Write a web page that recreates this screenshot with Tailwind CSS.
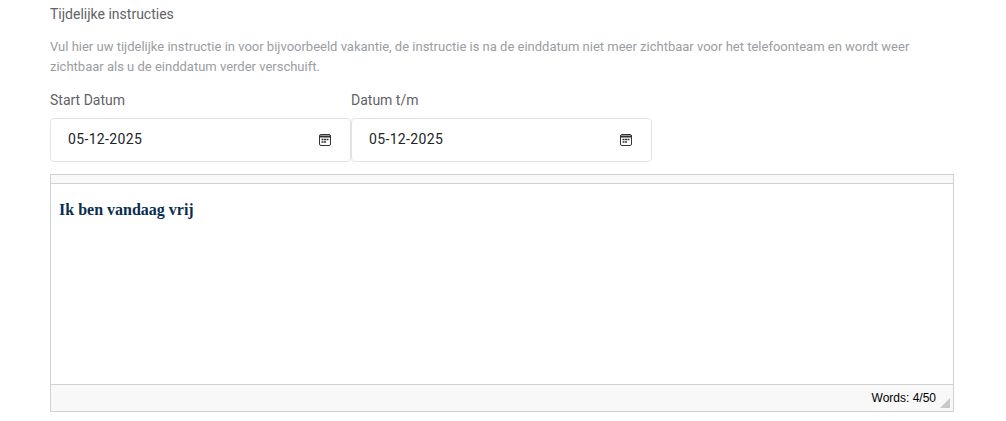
<!DOCTYPE html>
<html lang="nl">
<head>
  <meta charset="UTF-8">
  <title>Tijdelijke instructies</title>
  <script src="https://cdn.jsdelivr.net/npm/@tailwindcss/browser@4"></script>
</head>
<body class="bg-white font-['Roboto',sans-serif] h-[421px] overflow-hidden">
  <div class="pl-[50px] w-[954px] pt-[6px]">
    <h4 class="text-[14px] leading-[17px] text-[#5f6368]">Tijdelijke instructies</h4>

    <p class="mt-[14px] text-[13px] leading-[20px] text-[#9a9da3]">Vul hier uw tijdelijke instructie in voor bijvoorbeeld vakantie, de instructie is na de einddatum niet meer zichtbaar voor het telefoonteam en wordt weer zichtbaar als u de einddatum verder verschuift.</p>

    <!-- datum velden -->
    <div class="flex mt-[15px]">
      <div class="w-[301px]">
        <label class="block text-[14px] leading-[17px] text-[#5f6368]">Start Datum</label>
        <div class="mt-[9px] h-[44px] border border-[#e2e3e5] rounded-[4px] flex items-center justify-between pl-[17px] pr-[18px]">
          <span class="mb-[2px] text-[14px] tracking-[0.35px] text-[#212529]">05-12-2025</span>
          <svg class="w-[14px] h-[14px] text-[#333]" viewBox="0 0 14 14" fill="none" stroke="currentColor">
            <rect x="1.5" y="1.5" width="11" height="11" rx="1.5" stroke-width="1"/>
            <path d="M1.5 3.5h11" stroke-width="2"/>
            <path d="M3.5 6.5h2M6 6.5h2M8.5 6.5h2M3.5 9h2M6 9h2" stroke-width="1.5"/>
          </svg>
        </div>
      </div>
      <div class="w-[301px]">
        <label class="block text-[14px] leading-[17px] text-[#5f6368]">Datum t/m</label>
        <div class="mt-[9px] h-[44px] border border-[#e2e3e5] rounded-[4px] flex items-center justify-between pl-[17px] pr-[18px]">
          <span class="mb-[2px] text-[14px] tracking-[0.35px] text-[#212529]">05-12-2025</span>
          <svg class="w-[14px] h-[14px] text-[#333]" viewBox="0 0 14 14" fill="none" stroke="currentColor">
            <rect x="1.5" y="1.5" width="11" height="11" rx="1.5" stroke-width="1"/>
            <path d="M1.5 3.5h11" stroke-width="2"/>
            <path d="M3.5 6.5h2M6 6.5h2M8.5 6.5h2M3.5 9h2M6 9h2" stroke-width="1.5"/>
          </svg>
        </div>
      </div>
    </div>

    <!-- editor -->
    <div class="mt-[12px] h-[238px] border border-[#d1d1d1] flex flex-col">
      <div class="h-[9px] bg-[#f8f8f8] border-b border-[#d1d1d1]"></div>
      <div class="flex-1 pl-[8px] pt-[16px] font-['Liberation_Serif',serif] font-bold text-[16px] leading-[20px] text-[#0b2e4f]">Ik ben vandaag vrij</div>
      <div class="relative h-[27px] bg-[#f8f8f8] border-t border-[#d1d1d1] flex items-center justify-end pr-[17px] font-['Liberation_Sans',sans-serif] text-[12px] text-black">
        Words: 4/50
        <div class="absolute right-[3px] bottom-[3px] w-[10px] h-[10px] bg-[#c8c8c8] [clip-path:polygon(100%_0,100%_100%,0_100%)]"></div>
      </div>
    </div>
  </div>
</body>
</html>
